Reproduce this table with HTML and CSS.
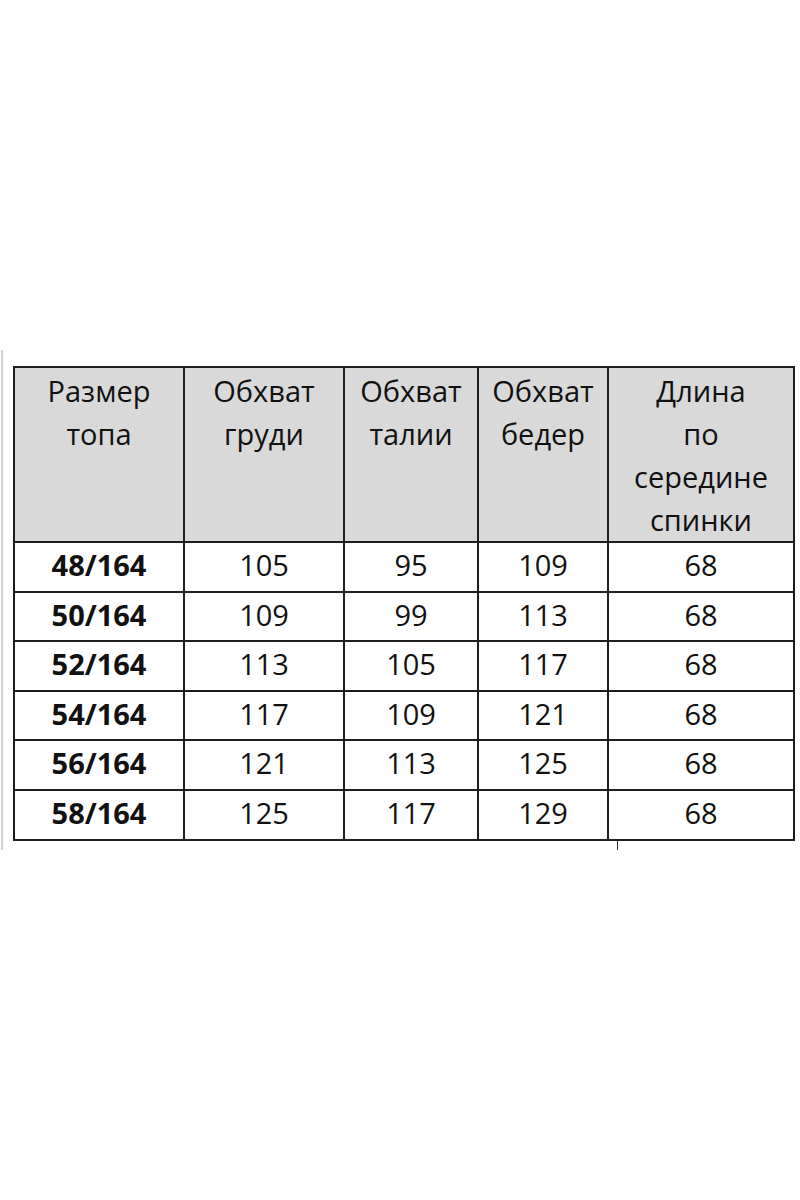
FILE: index.html
```html
<!DOCTYPE html>
<html lang="ru">
<head>
<meta charset="utf-8">
<title>Размеры</title>
<link rel="stylesheet" href="styles.css">
</head>
<body>
<div class="frame">
  <table class="sizes">
    <colgroup>
      <col class="c1"><col class="c2"><col class="c3"><col class="c4"><col class="c5">
    </colgroup>
    <thead>
      <tr>
        <th>Размер<br>топа</th>
        <th>Обхват<br>груди</th>
        <th>Обхват<br>талии</th>
        <th>Обхват<br>бедер</th>
        <th>Длина<br>по<br>середине<br>спинки</th>
      </tr>
    </thead>
    <tbody>
      <tr><td class="size">48/164</td><td>105</td><td>95</td><td>109</td><td>68</td></tr>
      <tr><td class="size">50/164</td><td>109</td><td>99</td><td>113</td><td>68</td></tr>
      <tr><td class="size">52/164</td><td>113</td><td>105</td><td>117</td><td>68</td></tr>
      <tr><td class="size">54/164</td><td>117</td><td>109</td><td>121</td><td>68</td></tr>
      <tr><td class="size">56/164</td><td>121</td><td>113</td><td>125</td><td>68</td></tr>
      <tr><td class="size">58/164</td><td>125</td><td>117</td><td>129</td><td>68</td></tr>
    </tbody>
  </table>
  <div class="tick"></div>
</div>
</body>
</html>
```

FILE: styles.css
```css
html, body {
  margin: 0;
  padding: 0;
  background: #ffffff;
}

body {
  font-family: "Open Sans", "Noto Sans", sans-serif;
  color: #111111;
}

.frame {
  margin-top: 350px;
  margin-left: 1px;
  border-left: 2px solid #d0d0d0;
  padding: 16px 0 0 10px;
  height: 484px;
}

.sizes {
  border-collapse: collapse;
  table-layout: fixed;
  width: 782px;
}

.c1 { width: 170px; }
.c2 { width: 160px; }
.c3 { width: 134px; }
.c4 { width: 130px; }
.c5 { width: 186px; }

.sizes th,
.sizes td {
  border: 2px solid #1e1e1e;
  text-align: center;
  padding: 0;
}

.sizes th {
  background: #d9d9d9;
  font-weight: 400;
  font-size: 29px;
  line-height: 43px;
  height: 168px;
  vertical-align: top;
  padding-top: 1px;
}

.sizes td {
  height: 44.6px;
  padding-bottom: 3px;
  font-size: 29px;
  line-height: 44.6px;
  vertical-align: middle;
}

.sizes td.size {
  font-weight: 700;
}

.tick {
  width: 1px;
  height: 11px;
  background: #333333;
  margin-left: 604px;
}
```
